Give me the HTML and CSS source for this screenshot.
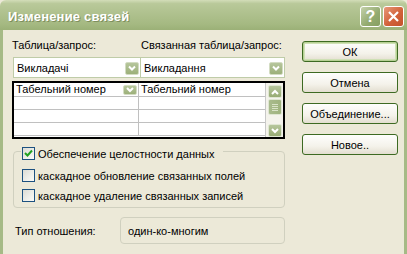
FILE: index.html
```html
<!DOCTYPE html>
<html lang="ru">
<head>
    <meta charset="UTF-8">
    <title>Изменение связей</title>
    <link rel="stylesheet" href="styles.css">
</head>
<body>
    <div class="window">
        <div class="titlebar">
            <span class="title">Изменение связей</span>
            <div class="caption-btns">
                <span class="cap-btn help">?</span>
                <span class="cap-btn close">
                    <svg width="13" height="13" viewBox="0 0 13 13"><path d="M2 2 L11 11 M11 2 L2 11" stroke="#fff" stroke-width="2.2" fill="none"/></svg>
                </span>
            </div>
        </div>
        <div class="client">
            <div class="main">
                <div class="labels">
                    <span>Таблица/запрос:</span>
                    <span>Связанная таблица/запрос:</span>
                </div>
                <div class="combos">
                    <div class="combo combo-left">
                        <span>Викладачі</span>
                        <span class="drop-btn"><svg width="12" height="12" viewBox="0 0 12 12"><path d="M3 4.5 L6 7.5 L9 4.5" stroke="#fff" stroke-width="2" fill="none"/></svg></span>
                    </div>
                    <div class="combo combo-right">
                        <span>Викладання</span>
                        <span class="drop-btn"><svg width="12" height="12" viewBox="0 0 12 12"><path d="M3 4.5 L6 7.5 L9 4.5" stroke="#fff" stroke-width="2" fill="none"/></svg></span>
                    </div>
                </div>
                <div class="grid">
                    <div class="cells">
                        <div class="row head">
                            <div class="cell">Табельний номер<span class="cell-btn"><svg width="10" height="8" viewBox="0 0 10 8"><path d="M2 2 L5 5 L8 2" stroke="#fff" stroke-width="2" fill="none"/></svg></span></div>
                            <div class="cell">Табельний номер</div>
                        </div>
                        <div class="row"><div class="cell"></div><div class="cell"></div></div>
                        <div class="row"><div class="cell"></div><div class="cell"></div></div>
                        <div class="row"><div class="cell"></div><div class="cell"></div></div>
                    </div>
                    <div class="scrollbar">
                        <span class="sb-btn"><svg width="10" height="8" viewBox="0 0 10 8"><path d="M2 6 L5 3 L8 6" stroke="#fff" stroke-width="2" fill="none"/></svg></span>
                        <span class="sb-thumb"><i></i><i></i><i></i><i></i></span>
                        <span class="sb-space"></span>
                        <span class="sb-btn"><svg width="10" height="8" viewBox="0 0 10 8"><path d="M2 2 L5 5 L8 2" stroke="#fff" stroke-width="2" fill="none"/></svg></span>
                    </div>
                </div>
                <fieldset class="group">
                    <legend>
                        <span class="check checked"><svg width="11" height="11" viewBox="0 0 11 11"><path d="M2 5 L4.5 7.5 L9 2.5" stroke="#21a121" stroke-width="2" fill="none"/></svg></span>
                        Обеспечение целостности данных
                    </legend>
                    <div class="check-row"><span class="check"></span>каскадное обновление связанных полей</div>
                    <div class="check-row"><span class="check"></span>каскадное удаление связанных записей</div>
                </fieldset>
                <div class="type-row">
                    <span class="type-label">Тип отношения:</span>
                    <div class="type-box">один-ко-многим</div>
                </div>
            </div>
            <div class="buttons">
                <button class="default">ОК</button>
                <button>Отмена</button>
                <button>Объединение...</button>
                <button>Новое..</button>
            </div>
        </div>
    </div>
</body>
</html>
```

FILE: styles.css
```css
body {
    margin: 0;
    padding: 0;
    font-family: "Liberation Sans", Arial, sans-serif;
    font-size: 11px;
    color: #000;
    background-color: #ece9d8;
}
.window {
    width: 407px;
    height: 254px;
    background-color: #ece9d8;
}
.titlebar {
    height: 30px;
    display: flex;
    align-items: center;
    justify-content: space-between;
    padding: 0 3px 0 8px;
    box-sizing: border-box;
    border-radius: 6px 6px 0 0;
    background: linear-gradient(#d3ddb9 0%, #b9c99a 12%, #afc18e 45%, #a5b982 80%, #9bb077 100%);
}
.title {
    color: #fff;
    font-weight: bold;
    font-size: 13px;
    letter-spacing: 0.2px;
    text-shadow: 1px 1px 0 #7e8f5e;
    margin-top: 2px;
}
.caption-btns {
    display: flex;
    gap: 2px;
    margin-top: 3px;
}
.cap-btn {
    width: 21px;
    height: 21px;
    box-sizing: border-box;
    border: 1px solid #fff;
    border-radius: 3px;
    display: flex;
    align-items: center;
    justify-content: center;
}
.help {
    background: linear-gradient(135deg, #c4d1ab, #93aa6f 60%, #879f62);
    color: #fff;
    font-weight: bold;
    font-size: 16px;
}
.close {
    background: linear-gradient(135deg, #e7997a, #d2623a 55%, #c4532c);
}
.client {
    height: 224px;
    border: 3px solid #a6ba86;
    border-top: none;
    display: flex;
}
.main {
    width: 273px;
    margin-left: 9px;
    padding-top: 9px;
}
.labels {
    display: grid;
    grid-template-columns: 129px 1fr;
    height: 13px;
    line-height: 13px;
}
.combos {
    display: grid;
    grid-template-columns: 129px 144px;
    margin-top: 5px;
}
.combo {
    height: 21px;
    box-sizing: border-box;
    border: 1px solid #bfcca8;
    background: #fff;
    display: flex;
    align-items: center;
    justify-content: space-between;
    padding: 1px 1px 0 3px;
}
.combo-left {
    margin-left: 1px;
}
.combo-right {
    border-left: none;
}
.drop-btn {
    width: 14px;
    height: 13px;
    box-sizing: border-box;
    border: 1px solid #d3dcc2;
    border-radius: 2px;
    background: linear-gradient(#b6c69c, #9cb079);
    display: flex;
    align-items: center;
    justify-content: center;
}
.grid {
    margin-top: 3px;
    height: 58px;
    box-sizing: border-box;
    border: 2px solid #000;
    display: flex;
    background: #fff;
}
.cells {
    flex: 1;
    overflow: hidden;
    border-right: 1px solid #c8c8c8;
}
.row {
    display: grid;
    grid-template-columns: 125px 1fr;
    height: 13px;
    box-sizing: border-box;
    border-bottom: 1px solid #c0c0c0;
}
.row.head {
    height: 14px;
}
.cell {
    border-right: 1px solid #c0c0c0;
    padding-left: 2px;
    line-height: 13px;
    display: flex;
    justify-content: space-between;
    align-items: center;
}
.cell:last-child {
    border-right: none;
}
.cell-btn {
    width: 14px;
    height: 10px;
    margin-right: 1px;
    box-sizing: border-box;
    border: 1px solid #d3dcc2;
    border-radius: 2px;
    background: linear-gradient(#b6c69c, #9cb079);
    display: flex;
    align-items: center;
    justify-content: center;
}
.scrollbar {
    width: 17px;
    background: #f4f3ec;
    display: flex;
    flex-direction: column;
    align-items: center;
    padding-top: 2px;
    box-sizing: border-box;
}
.sb-btn {
    width: 14px;
    height: 13px;
    box-sizing: border-box;
    border: 1px solid #dfe6d2;
    border-radius: 2px;
    background: linear-gradient(#b6c69c, #97ab74);
    display: flex;
    align-items: center;
    justify-content: center;
}
.sb-thumb {
    width: 14px;
    height: 16px;
    margin-top: 1px;
    box-sizing: border-box;
    border: 1px solid #dfe6d2;
    border-radius: 2px;
    background: linear-gradient(90deg, #a9bb8d, #9fb37e);
    display: flex;
    flex-direction: column;
    align-items: center;
    justify-content: center;
    gap: 1px;
}
.sb-thumb i {
    display: block;
    width: 6px;
    height: 1px;
    background: #d9e2c8;
}
.sb-space {
    flex: 1;
}
.group {
    margin: 4px 0 0 1px;
    padding: 9px 6px 7px 7px;
    border: 1px solid #d0d0bf;
    border-radius: 4px;
    height: 65px;
    box-sizing: border-box;
    display: flex;
    flex-direction: column;
    gap: 7px;
}
.group legend {
    padding: 4px 9px 0 1px;
    display: flex;
    align-items: center;
    gap: 3px;
    margin-left: 0;
}
.check-row {
    display: flex;
    align-items: center;
    gap: 3px;
    height: 13px;
    padding-left: 1px;
}
.check {
    width: 13px;
    height: 13px;
    box-sizing: border-box;
    border: 1px solid #1c5180;
    background: linear-gradient(135deg, #dcdcd5, #fbfbf8);
    display: inline-flex;
    align-items: center;
    justify-content: center;
    flex: none;
}
.type-row {
    display: flex;
    align-items: center;
    margin-top: 9px;
}
.type-label {
    width: 105px;
    padding-left: 3px;
}
.type-box {
    width: 165px;
    height: 27px;
    box-sizing: border-box;
    border: 1px solid #d0d0bf;
    border-radius: 4px;
    padding-left: 7px;
    display: flex;
    align-items: center;
}
.buttons {
    margin-left: 17px;
    padding-top: 11px;
    display: flex;
    flex-direction: column;
    gap: 10px;
}
.buttons button {
    width: 96px;
    height: 21px;
    font-family: "Liberation Sans", Arial, sans-serif;
    font-size: 11px;
    color: #000;
    border: 1px solid #3d6a22;
    border-radius: 3px;
    background: linear-gradient(#fefefd 0%, #f4f2ea 60%, #e3ded0 100%);
    padding: 0;
}
.buttons button.default {
    box-shadow: inset 0 0 0 1px #b7d094, inset 0 0 0 2px #cfe0b5;
}
```
